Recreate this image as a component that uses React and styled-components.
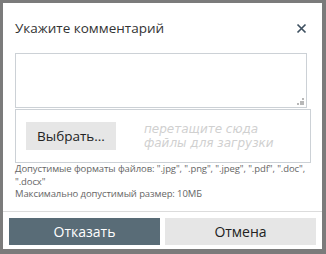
import React from 'react';
import styled, { createGlobalStyle } from 'styled-components';

const Global = createGlobalStyle`
  html, body {
    margin: 0;
    padding: 0;
    background: #7b7b7b;
    font-family: "Open Sans", "Noto Sans", sans-serif;
  }
`;

const Overlay = styled.div`
  width: 326px;
  height: 254px;
  box-sizing: border-box;
  padding: 3px 4px 5px 3px;
  background: #7b7b7b;
`;

const Modal = styled.div`
  background: #fff;
  height: 100%;
  display: flex;
  flex-direction: column;
`;

const Header = styled.div`
  display: flex;
  align-items: center;
  justify-content: space-between;
  padding: 10px 15px 0 12px;
  height: 30px;
`;

const Title = styled.h3`
  margin: 0;
  font-size: 13.5px;
  font-weight: 400;
  color: #333;
`;

const Close = styled.button`
  border: 0;
  background: none;
  padding: 0;
  width: 11px;
  height: 11px;
  display: flex;
  cursor: pointer;
`;

const Body = styled.div`
  padding: 10px 12px 0 12px;
  display: flex;
  flex-direction: column;
`;

const CommentWrap = styled.div`
  position: relative;
  width: 292px;
  height: 55px;
`;

const Comment = styled.textarea`
  width: 100%;
  height: 100%;
  box-sizing: border-box;
  border: 1px solid #ccd1d6;
  resize: none;
  margin: 0;
  display: block;
  font-family: inherit;
`;

const Grip = styled.span`
  position: absolute;
  right: 3px;
  bottom: 3px;
  width: 7px;
  height: 7px;
  background:
    linear-gradient(#b8b8b8, #b8b8b8) 5px 0 / 2px 2px no-repeat,
    linear-gradient(#b8b8b8, #b8b8b8) 2.5px 2.5px / 2px 2px no-repeat,
    linear-gradient(#b8b8b8, #b8b8b8) 5px 2.5px / 2px 2px no-repeat,
    linear-gradient(#b8b8b8, #b8b8b8) 0 5px / 2px 2px no-repeat,
    linear-gradient(#b8b8b8, #b8b8b8) 2.5px 5px / 2px 2px no-repeat,
    linear-gradient(#b8b8b8, #b8b8b8) 5px 5px / 2px 2px no-repeat;
  pointer-events: none;
`;

const Drop = styled.div`
  width: 296px;
  height: 54px;
  box-sizing: border-box;
  margin-top: 1px;
  border: 1px solid #ccd1d6;
  display: flex;
  align-items: center;
  padding: 0 10px;
  gap: 28px;
`;

const Pick = styled.button`
  background: #e6e6e6;
  border: 0;
  width: 90px;
  height: 28px;
  font-family: inherit;
  font-size: 13.5px;
  color: #222;
  padding: 0;
`;

const DropHint = styled.div`
  display: flex;
  flex-direction: column;
  font-family: "DejaVu Sans", sans-serif;
  font-style: italic;
  font-size: 12px;
  line-height: 14px;
  color: #d0d0d0;
  white-space: nowrap;
`;

const Hint = styled.p`
  margin: 0;
  font-size: 9.5px;
  line-height: 12.5px;
  color: #666;
  letter-spacing: -0.1px;
`;

const Footer = styled.div`
  margin-top: auto;
  border-top: 1px solid #dcdcdc;
  display: flex;
  gap: 5px;
  padding: 6px 6px 4px 6px;
`;

const Action = styled.button`
  flex: 1;
  height: 27px;
  border: 0;
  font-family: inherit;
  font-size: 14px;
  background: ${p => p.primary ? '#596c77' : '#e6e6e6'};
  color: ${p => p.primary ? '#fff' : '#222'};
`;

export default function App() {
  return (
    <>
      <Global />
      <Overlay>
        <Modal>
          <Header>
            <Title>Укажите комментарий</Title>
            <Close aria-label="close">
              <svg width="11" height="11" viewBox="0 0 11 11">
                <path d="M1.5 1.5L9.5 9.5M9.5 1.5L1.5 9.5" stroke="#3e5060" strokeWidth="1.7" />
              </svg>
            </Close>
          </Header>
          <Body>
            <CommentWrap>
              <Comment />
              <Grip />
            </CommentWrap>
            <Drop>
              <Pick>Выбрать...</Pick>
              <DropHint>
                <span>перетащите сюда</span>
                <span>файлы для загрузки</span>
              </DropHint>
            </Drop>
            <Hint>Допустимые форматы файлов: ".jpg", ".png", ".jpeg", ".pdf", ".doc", ".docx"</Hint>
            <Hint>Максимально допустимый размер: 10МБ</Hint>
          </Body>
          <Footer>
            <Action primary>Отказать</Action>
            <Action>Отмена</Action>
          </Footer>
        </Modal>
      </Overlay>
    </>
  );
}
